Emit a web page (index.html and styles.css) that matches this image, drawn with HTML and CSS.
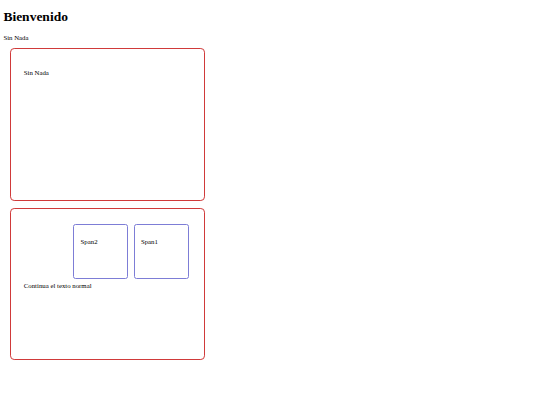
FILE: index.html
```html
<!DOCTYPE html>
<html lang="es">
<head>
<meta charset="utf-8">
<title>Bienvenido</title>
<link rel="stylesheet" href="styles.css">
</head>
<body>
<h1>Bienvenido</h1>
<p>Sin Nada</p>
<div class="box">
  <p>Sin Nada</p>
</div>
<div class="box">
  <div class="row">
    <div class="chip"><p>Span2</p></div>
    <div class="chip"><p>Span1</p></div>
  </div>
  <p class="after">Continua el texto normal</p>
</div>
</body>
</html>
```
FILE: styles.css
```css
html {
  background: #ffffff;
}
body {
  margin: 3.375px;
  font-family: "Liberation Serif", "Times New Roman", serif;
  font-size: 6.8px;
  line-height: 1.15;
  color: #000000;
}
h1 {
  font-size: 13.5px;
  line-height: 1.15;
  margin: 5.7px 0 9px;
}
p {
  margin: 1em 0;
}
.box {
  box-sizing: border-box;
  width: 194.9px;
  height: 152.7px;
  margin: 6.75px;
  padding: 12.66px;
  border: 1px solid #d03a3a;
  border-radius: 4.2px;
}
.row {
  display: flex;
  justify-content: flex-end;
}
.chip {
  box-sizing: border-box;
  width: 55.2px;
  height: 55.5px;
  margin: 2.6px;
  padding: 6.33px;
  border: 1px solid #7d7dd6;
  border-radius: 2.5px;
}
.after {
  margin-top: 0;
}
```
